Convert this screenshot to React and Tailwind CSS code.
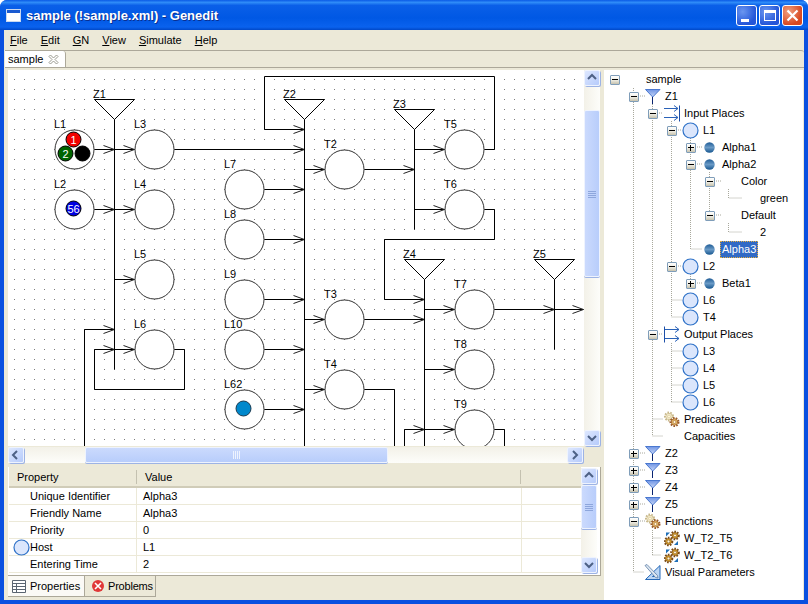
import React from 'react';

const treeRows = [
  { depth: 0, exp: '-', label: 'sample' },
  { depth: 1, exp: '-', icon: 'zone', label: 'Z1' },
  { depth: 2, exp: '-', icon: 'input', label: 'Input Places' },
  { depth: 3, exp: '-', icon: 'place', label: 'L1' },
  { depth: 4, exp: '+', icon: 'token', label: 'Alpha1' },
  { depth: 4, exp: '-', icon: 'token', label: 'Alpha2' },
  { depth: 5, exp: '-', label: 'Color' },
  { depth: 6, label: 'green' },
  { depth: 5, exp: '-', label: 'Default' },
  { depth: 6, label: '2' },
  { depth: 4, icon: 'token', label: 'Alpha3', selected: true },
  { depth: 3, exp: '-', icon: 'place', label: 'L2' },
  { depth: 4, exp: '+', icon: 'token', label: 'Beta1' },
  { depth: 3, icon: 'place', label: 'L6' },
  { depth: 3, icon: 'place', label: 'T4' },
  { depth: 2, exp: '-', icon: 'output', label: 'Output Places' },
  { depth: 3, icon: 'place', label: 'L3' },
  { depth: 3, icon: 'place', label: 'L4' },
  { depth: 3, icon: 'place', label: 'L5' },
  { depth: 3, icon: 'place', label: 'L6' },
  { depth: 2, icon: 'gears', label: 'Predicates' },
  { depth: 2, label: 'Capacities' },
  { depth: 1, exp: '+', icon: 'zone', label: 'Z2' },
  { depth: 1, exp: '+', icon: 'zone', label: 'Z3' },
  { depth: 1, exp: '+', icon: 'zone', label: 'Z4' },
  { depth: 1, exp: '+', icon: 'zone', label: 'Z5' },
  { depth: 1, exp: '-', icon: 'gears', label: 'Functions' },
  { depth: 2, icon: 'func', label: 'W_T2_T5' },
  { depth: 2, icon: 'func', label: 'W_T2_T6' },
  { depth: 1, icon: 'visual', label: 'Visual Parameters' },
];

const guides = [
  'M633.5 88V572H644',
  'M652.5 104V436M652.5 419H663M652.5 436H663',
  'M671.5 121V317M671.5 300H682M671.5 317H682',
  'M671.5 343V402M671.5 351H682M671.5 368H682M671.5 385H682M671.5 402H682',
  'M690.5 138V160M690.5 168V249H702',
  'M690.5 274V279',
  'M709.5 172V211',
  'M728.5 189V198H742M728.5 223V232H742',
  'M652.5 530V555M652.5 538H661M652.5 555H661',
  'M638 96H645M657 113H663M676 130H682M695 147H702M695 164H702M714 181H721M714 215H721',
  'M676 266H682M695 283H702M657 334H663',
  'M638 453H645M638 470H645M638 487H645M638 504H645M638 521H645',
];

const nodes = [
  ['L1', 74, 149], ['L2', 74, 209], ['L3', 154, 149], ['L4', 154, 209], ['L5', 154, 279], ['L6', 154, 349],
  ['L7', 244, 189], ['L8', 244, 239], ['L9', 244, 299], ['L10', 244, 349], ['L62', 244, 409],
  ['T2', 344, 169], ['T3', 344, 319], ['T4', 344, 389], ['T5', 464, 149], ['T6', 464, 209],
  ['T7', 474, 309], ['T8', 474, 369], ['T9', 474, 429],
];

const zones = [
  ['Z1', 114, 99, 369], ['Z2', 304, 99, 446], ['Z3', 414, 109, 229], ['Z4', 424, 259, 446], ['Z5', 554, 259, 349],
];

// polylines, each one may end in an arrow head
const edges = [
  ['94,149 114,149', 1], ['114,149 134,149', 1], ['174,149 304,149', 1],
  ['94,209 114,209', 1], ['114,209 134,209', 1], ['114,279 134,279', 1], ['114,349 134,349', 1],
  ['174,349 184,349 184,389 94,389 94,349 114,349', 1], ['84,446 84,329 114,329', 1],
  ['264,189 304,189', 1], ['264,239 304,239', 1], ['264,299 304,299', 1], ['264,349 304,349', 1], ['264,409 304,409', 1],
  ['304,169 324,169', 1], ['364,169 414,169', 1], ['414,149 444,149', 1], ['414,209 444,209', 1],
  ['484,149 494,149 494,76 264,76 264,129 304,129', 1], ['484,209 494,209 494,239 384,239 384,299 424,299', 1],
  ['304,319 324,319', 1], ['364,319 424,319', 1], ['304,389 324,389', 1], ['364,389 394,389 394,446', 0],
  ['424,309 454,309', 1], ['494,309 554,309', 1], ['554,309 583,309', 1], ['424,369 454,369', 1],
  ['424,429 454,429', 1], ['404,446 404,429 424,429', 1], ['494,429 504,429 504,446', 0],
];

const properties = [
  ['Unique Identifier', 'Alpha3'],
  ['Friendly Name', 'Alpha3'],
  ['Priority', '0'],
  ['Host', 'L1', true],
  ['Entering Time', '2'],
];

function Expander({ sign }) {
  return (
    <span className="relative flex h-[10px] w-[10px] items-center justify-center rounded-[1px] border border-[#7f9db9] bg-[linear-gradient(#ffffff,#f0eee4_50%,#c6c2ae)]">
      <span className="h-px w-[6px] bg-black" />
      {sign === '+' && <span className="absolute h-[6px] w-px bg-black" />}
    </span>
  );
}

function Gear({ cx, cy, r, fill, teeth }) {
  return (
    <g>
      <circle cx={cx} cy={cy} r={r} fill="none" stroke={teeth} strokeWidth="2" strokeDasharray="1.6 1.2" />
      <circle cx={cx} cy={cy} r={r - 0.8} fill={fill} stroke={teeth} strokeWidth="0.8" />
      <circle cx={cx} cy={cy} r={r / 2.6} fill="#fff6d8" stroke={teeth} strokeWidth="0.6" />
    </g>
  );
}

function TreeIcon({ type }) {
  if (type === 'zone') {
    return (
      <svg width="16" height="17" viewBox="0 0 16 17">
        <defs>
          <linearGradient id="zoneFill" x1="0" y1="0" x2="0" y2="1">
            <stop offset="0" stopColor="#6f94e4" />
            <stop offset="1" stopColor="#c9d8f8" />
          </linearGradient>
        </defs>
        <path d="M7.5 8.5V16" stroke="#0a2470" strokeWidth="1" />
        <path d="M0.5 1.5H15L7.7 9Z" fill="url(#zoneFill)" stroke="#4a78d0" strokeWidth="1" />
      </svg>
    );
  }
  if (type === 'place') {
    return (
      <svg width="17" height="17" viewBox="0 0 17 17">
        <circle cx="8.5" cy="8.5" r="7.5" fill="#dbe6fc" stroke="#2f72c8" strokeWidth="1.2" />
      </svg>
    );
  }
  if (type === 'token') {
    return (
      <svg width="11" height="11" viewBox="0 0 11 11">
        <defs>
          <linearGradient id="tokenFill" x1="0" y1="0" x2="0" y2="1">
            <stop offset="0" stopColor="#1f5c96" />
            <stop offset="0.5" stopColor="#6a9ac6" />
            <stop offset="1" stopColor="#175790" />
          </linearGradient>
        </defs>
        <circle cx="5.5" cy="5.5" r="5.2" fill="url(#tokenFill)" />
      </svg>
    );
  }
  if (type === 'input' || type === 'output') {
    const bar = type === 'input' ? 15.5 : 0.5;
    const from = type === 'input' ? 0 : 1;
    const to = type === 'input' ? 14 : 15;
    return (
      <svg width="16" height="17" viewBox="0 0 16 17" fill="none" stroke="#2a62b8" strokeWidth="1">
        <path d={`M${bar} 0.5V16.5`} stroke="#1c4fa8" />
        <path d={`M${from} 3.5H${to}M${to - 4} 0.5L${to} 3.5L${to - 4} 6.5`} />
        <path d={`M${from} 12.5H${to}M${to - 4} 9.5L${to} 12.5L${to - 4} 15.5`} />
      </svg>
    );
  }
  if (type === 'gears') {
    return (
      <svg width="16" height="17" viewBox="0 0 16 17">
        <Gear cx={5} cy={5.5} r={4} fill="#fbf3d4" teeth="#c8b88a" />
        <Gear cx={10.5} cy={11} r={4} fill="#ecc36c" teeth="#9a5a28" />
      </svg>
    );
  }
  if (type === 'func') {
    return (
      <svg width="16" height="17" viewBox="0 0 16 17">
        <Gear cx={11} cy={5.5} r={3.8} fill="#e8b030" teeth="#7a4a14" />
        <Gear cx={4.5} cy={11.5} r={3.8} fill="#e8b030" teeth="#7a4a14" />
        <path d="M2 6.5V2.5H6L2 6.5ZM14 11V15H10L14 11Z" fill="#1f6fb8" />
      </svg>
    );
  }
  if (type === 'visual') {
    return (
      <svg width="17" height="17" viewBox="0 0 17 17">
        <path d="M16 1.5V15.5H1.5Z" fill="#bcd6f4" stroke="#2468b8" strokeWidth="1" />
        <path d="M11.5 9.5V12.5H8.5Z" fill="#ffffff" stroke="#2468b8" strokeWidth="1" />
        <path d="M1 1.5L3 0.5L13.5 11.5L14 14L11.5 13.5Z" fill="#dce6f0" stroke="#6080a8" strokeWidth="0.8" />
      </svg>
    );
  }
  return null;
}

function TreeRow({ row }) {
  return (
    <div className="relative flex h-[17px] items-center" style={{ paddingLeft: row.depth * 19 + 1 }}>
      <span className="flex w-[19px] shrink-0 items-center justify-center">
        {row.exp && <Expander sign={row.exp} />}
      </span>
      <span className="flex h-[17px] w-[19px] shrink-0 items-center justify-center">
        {row.icon && <TreeIcon type={row.icon} />}
      </span>
      {row.selected ? (
        <span className="ml-[1px] box-border flex h-[17px] items-center border border-dotted border-[#e8b040] bg-[#316ac5] pr-[1px] pl-[1px] text-white">
          {row.label}
        </span>
      ) : (
        <span className="ml-[3px] whitespace-nowrap">{row.label}</span>
      )}
    </div>
  );
}

function Chevron({ dir }) {
  const paths = {
    up: 'M2 7L6 3L10 7',
    down: 'M2 4L6 8L10 4',
    left: 'M7 2L3 6L7 10',
    right: 'M4 2L8 6L4 10',
  };
  return (
    <svg width="12" height="12" viewBox="0 0 12 12" fill="none" stroke="#4d6185" strokeWidth="2">
      <path d={paths[dir]} />
    </svg>
  );
}

function ScrollButton({ dir }) {
  return (
    <div className="flex h-[16px] w-[16px] shrink-0 items-center justify-center rounded-[2px] border border-[#eef3fe] bg-[linear-gradient(135deg,#dde7fe,#b6cbfb)] shadow-[1px_1px_0_#9db3e4]">
      <Chevron dir={dir} />
    </div>
  );
}

function Grip({ vertical }) {
  return (
    <svg width="8" height="8" viewBox="0 0 8 8" stroke={vertical ? '#8da6dc' : '#eef3fe'} strokeWidth="1">
      {vertical ? <path d="M0 1.5H8M0 3.5H8M0 5.5H8M0 7.5H8" /> : <path d="M0.5 0V8M2.5 0V8M4.5 0V8M6.5 0V8" />}
    </svg>
  );
}

function VerticalScroll({ top, thumb, bottom }) {
  return (
    <div className="flex h-full w-[16px] shrink-0 flex-col bg-[linear-gradient(90deg,#f3f1e8,#fdfdfa)]">
      <ScrollButton dir="up" />
      <div style={{ height: top }} />
      <div style={{ height: thumb }} className="flex items-center justify-center rounded-[2px] border border-[#eef3fe] bg-[linear-gradient(90deg,#cbdafd,#b8cdfb)] shadow-[0_1px_0_#9db3e4]">
        <Grip vertical />
      </div>
      <div style={{ height: bottom }} />
      <ScrollButton dir="down" />
    </div>
  );
}

function HorizontalScroll() {
  return (
    <div className="flex h-[16px] w-[575px] bg-[linear-gradient(#f3f1e8,#fdfdfa)]">
      <ScrollButton dir="left" />
      <div className="w-[61px]" />
      <div className="flex h-[16px] w-[303px] items-center justify-center rounded-[2px] border border-[#eef3fe] bg-[linear-gradient(#cbdafd,#b8cdfb)] shadow-[0_1px_0_#9db3e4]">
        <Grip />
      </div>
      <div className="flex-1" />
      <ScrollButton dir="right" />
    </div>
  );
}

function Diagram() {
  return (
    <svg width="576" height="376" viewBox="8 70 576 376" className="block shrink-0 bg-white">
      <defs>
        <pattern id="grid" x="4" y="0" width="10" height="10" patternUnits="userSpaceOnUse">
          <rect x="0" y="9" width="1" height="1" fill="#7c7c7c" />
        </pattern>
      </defs>
      <rect x="8" y="70" width="576" height="376" fill="url(#grid)" />
      <g fill="none" stroke="#000" strokeWidth="1" transform="translate(0.5 0.5)">
        {edges.map(([points, arrow], i) => {
          const pts = points.split(' ');
          const [ex, ey] = pts[pts.length - 1].split(',').map(Number);
          return (
            <g key={i}>
              <polyline points={points} />
              {arrow === 1 && <path d={`M${ex - 11} ${ey - 4}L${ex} ${ey}L${ex - 11} ${ey + 4}`} stroke="#222" />}
            </g>
          );
        })}
        {zones.map(([name, x, top, end]) => (
          <g key={name}>
            <path d={`M${x - 20} ${top}H${x + 20}L${x} ${top + 20}Z`} fill="#fff" />
            <path d={`M${x} ${top + 20}V${end}`} />
          </g>
        ))}
        {nodes.map(([name, x, y]) => (
          <circle key={name} cx={x} cy={y} r="19.5" fill="#fff" stroke="#333" />
        ))}
        <circle cx="73" cy="139" r="7.5" fill="#f00000" />
        <circle cx="65" cy="153" r="7.5" fill="#006400" />
        <circle cx="82" cy="153" r="7.5" fill="#000" />
        <circle cx="73" cy="208" r="7.5" fill="#0000e0" />
        <circle cx="243" cy="408" r="7.5" fill="#0088cc" stroke="#1a3a50" />
      </g>
      <g fontSize="11" fill="#000">
        {nodes.map(([name, x, y]) => (
          <text key={name} x={x - 20} y={y - 21}>{name}</text>
        ))}
        {zones.map(([name, x, top]) => (
          <text key={name} x={x - 21} y={top - 1}>{name}</text>
        ))}
      </g>
      <g fontSize="11" fill="#fff" textAnchor="middle">
        <text x="73.5" y="143.5">1</text>
        <text x="65.5" y="157.5">2</text>
        <text x="73.5" y="212.5">56</text>
      </g>
    </svg>
  );
}

function TitleButton({ children, red }) {
  return (
    <div className={`flex h-[21px] w-[21px] items-center justify-center rounded-[3px] border border-white ${red ? 'bg-[radial-gradient(circle_at_30%_30%,#f0a080,#d84820_70%)]' : 'bg-[radial-gradient(circle_at_30%_30%,#6a96f0,#2456d8_70%)]'}`}>
      {children}
    </div>
  );
}

export default function App() {
  return (
    <div className="h-[604px] w-[808px] overflow-hidden bg-white text-[11px] leading-none text-black [font-family:'Liberation_Sans',sans-serif]">
      <div className="flex h-full flex-col rounded-t-[7px] bg-[#0a50e0]">
        {/* title bar */}
        <div className="flex h-[30px] shrink-0 items-center rounded-t-[7px] bg-[linear-gradient(#0a5ae6,#2f8cf8_8%,#0a5fe8_18%,#0058e4_60%,#0a62ee_90%,#0048c8)] pr-[5px] pl-[6px]">
          <div className="flex h-[13px] w-[15px] flex-col border border-[#c8d8f0] bg-white">
            <div className="h-[3px] bg-[#1a5ad0]" />
          </div>
          <span className="ml-[5px] text-[13px] font-bold text-white [text-shadow:1px_1px_0_#0a2f90]">sample (!sample.xml) - Genedit</span>
          <div className="ml-auto flex gap-[2px]">
            <TitleButton><span className="mt-[10px] mr-[3px] h-[3px] w-[8px] bg-white" /></TitleButton>
            <TitleButton><span className="h-[11px] w-[12px] border border-t-[3px] border-white" /></TitleButton>
            <TitleButton red>
              <svg width="13" height="13" viewBox="0 0 13 13" stroke="#fff" strokeWidth="2.2"><path d="M1.5 1.5L11.5 11.5M11.5 1.5L1.5 11.5" /></svg>
            </TitleButton>
          </div>
        </div>

        <div className="mx-[4px] mb-[4px] flex min-h-0 flex-1 flex-col bg-[#ece9d8]">
          {/* menu bar */}
          <div className="flex h-[20px] shrink-0 items-center gap-[13px] pl-[6px]">
            <span><span className="underline">F</span>ile</span>
            <span><span className="underline">E</span>dit</span>
            <span><span className="underline">G</span>N</span>
            <span><span className="underline">V</span>iew</span>
            <span><span className="underline">S</span>imulate</span>
            <span><span className="underline">H</span>elp</span>
          </div>

          {/* editor tabs */}
          <div className="ml-px flex h-[18px] shrink-0 rounded-tr-[3px] border-t border-b border-[#aca899] bg-[#ece9d8]">
            <div className="flex w-[61px] items-center rounded-tr-[3px] border-r border-[#aca899] bg-white pl-[3px]">
              <span>sample</span>
              <svg width="11" height="11" viewBox="0 0 11 11" className="ml-[5px]" fill="#fff" stroke="#9a9a90" strokeWidth="1">
                <path d="M1 2.5L2.5 1L5.5 4L8.5 1L10 2.5L7 5.5L10 8.5L8.5 10L5.5 7L2.5 10L1 8.5L4 5.5Z" />
              </svg>
            </div>
          </div>

          <div className="flex min-h-0 flex-1">
            {/* editor + properties */}
            <div className="flex w-[597px] shrink-0 flex-col pt-[2px] pl-[4px]">
              <div className="flex h-[376px] shrink-0">
                <Diagram />
                <VerticalScroll top={24} thumb={167} bottom={153} />
              </div>
              <div className="mt-px h-[16px] shrink-0">
                <HorizontalScroll />
              </div>
              <div className="mt-[4px] flex h-[109px] shrink-0 border-r border-b border-[#aca899] bg-white pl-px">
                <div className="w-[572px] shrink-0">
                  <div className="flex h-[21px] items-center border-b-2 border-[#d0ccb8] bg-[#ece9d8] pt-px">
                    <div className="flex h-[14px] w-[128px] items-center border-r border-[#c4c1b0] pl-[8px]">Property</div>
                    <div className="flex h-[14px] w-[384px] items-center border-r border-[#c4c1b0] pl-[8px]">Value</div>
                  </div>
                  {properties.map(([name, value, host]) => (
                    <div key={name} className="flex h-[17px] border-b border-[#ece9d8]">
                      <div className="flex w-[128px] items-center border-r border-[#ece9d8] pt-px">
                        <span className="-mt-px flex w-[21px] shrink-0 justify-end">
                          {host && <TreeIcon type="place" />}
                        </span>
                        <span>{name}</span>
                      </div>
                      <div className="flex w-[385px] items-center border-r border-[#ece9d8] pt-px pl-[6px]">{value}</div>
                    </div>
                  ))}
                </div>
                <div className="mt-px h-[105px] shrink-0">
                  <VerticalScroll top={1} thumb={44} bottom={28} />
                </div>
              </div>
              <div className="flex h-[21px] shrink-0 items-stretch">
                <div className="flex w-[77px] items-center gap-[4px] border-r border-b border-[#aca899] bg-[#fbfaf6] pl-[4px]">
                  <svg width="14" height="13" viewBox="0 0 14 13" fill="#fff" stroke="#5a6470" strokeWidth="1">
                    <path d="M0.5 0.5H13.5V12.5H0.5ZM0.5 3.5H13.5M0.5 6.5H13.5M0.5 9.5H13.5M4.5 3.5V12.5" />
                  </svg>
                  <span>Properties</span>
                </div>
                <div className="flex w-[71px] items-center gap-[4px] border-r border-b border-[#aca899] pl-[7px]">
                  <span className="flex h-[12px] w-[12px] items-center justify-center rounded-full bg-[#e03838]">
                    <svg width="8" height="8" viewBox="0 0 8 8" stroke="#fff" strokeWidth="1.6"><path d="M1 1L7 7M7 1L1 7" /></svg>
                  </span>
                  <span className="tracking-[-0.2px]">Problems</span>
                </div>
              </div>
            </div>

            {/* tree */}
            <div className="relative mt-[2px] ml-[3px] w-[199px] shrink-0 bg-white pt-px">
              <svg width="199" height="530" viewBox="604 70 199 530" className="absolute top-0 left-0" fill="none" stroke="#a8a89c" strokeWidth="1" strokeDasharray="1 1">
                {guides.map((d, i) => <path key={i} d={d} />)}
              </svg>
              {treeRows.map((row, i) => <TreeRow key={i} row={row} />)}
            </div>
          </div>
        </div>
      </div>
    </div>
  );
}
